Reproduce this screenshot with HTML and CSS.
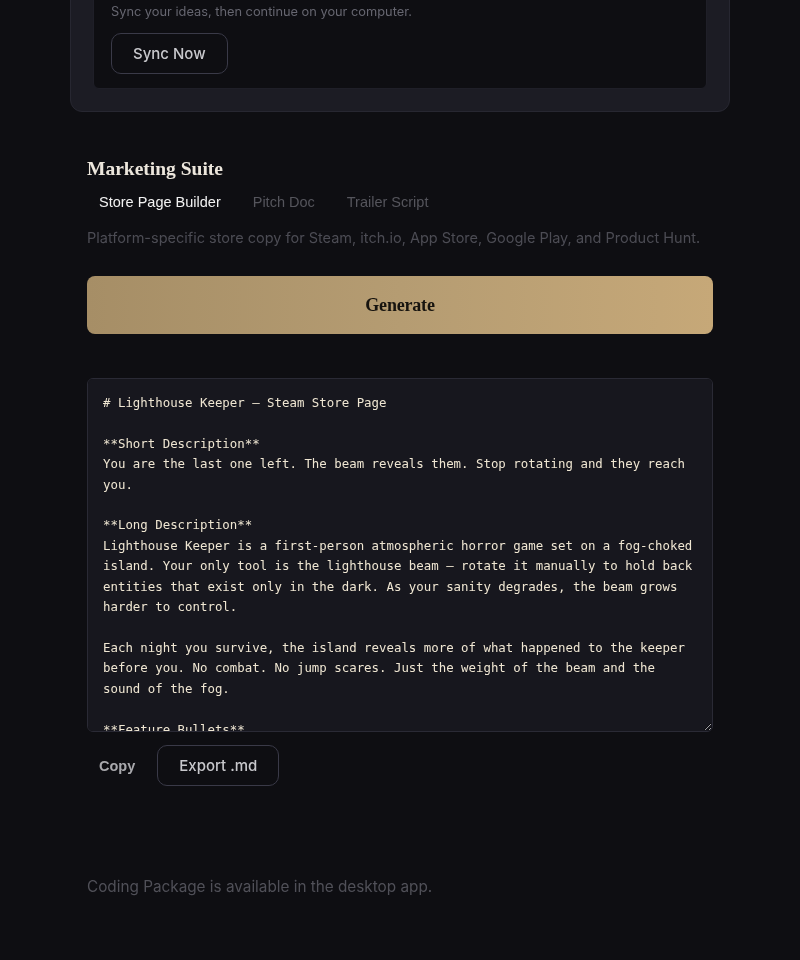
FILE: index.html
```html
<!DOCTYPE html>
<html lang="en">
<head>
  <meta charset="UTF-8">
  <meta name="viewport" content="width=device-width, initial-scale=1.0">
  <title>Marketing Suite</title>
  <link rel="stylesheet" href="styles.css">
</head>
<body>

  <main class="page">

    <div class="sync-card">
      <div class="sync-panel">
        <p class="sync-text">Sync your ideas, then continue on your computer.</p>
        <button class="btn-outline">Sync Now</button>
      </div>
    </div>

    <section class="suite">
      <h2 class="suite-title">Marketing Suite</h2>

      <div class="tabs">
        <button class="tab active">Store Page Builder</button>
        <button class="tab">Pitch Doc</button>
        <button class="tab">Trailer Script</button>
      </div>

      <p class="suite-desc">Platform-specific store copy for Steam, itch.io, App Store, Google Play, and Product Hunt.</p>

      <button class="btn-generate">Generate</button>

      <textarea class="output" spellcheck="false" readonly># Lighthouse Keeper — Steam Store Page

**Short Description**
You are the last one left. The beam reveals them. Stop rotating and they reach you.

**Long Description**
Lighthouse Keeper is a first-person atmospheric horror game set on a fog-choked island. Your only tool is the lighthouse beam — rotate it manually to hold back entities that exist only in the dark. As your sanity degrades, the beam grows harder to control.

Each night you survive, the island reveals more of what happened to the keeper before you. No combat. No jump scares. Just the weight of the beam and the sound of the fog.

**Feature Bullets**
- Hand-cranked beam mechanics that fight back as your sanity slips
- A fog-choked island that changes every night
- Environmental storytelling told through the previous keeper's logs
- No combat, no jump scares — only light and dark</textarea>

      <div class="output-actions">
        <button class="btn-text">Copy</button>
        <button class="btn-outline">Export .md</button>
      </div>

      <p class="note">Coding Package is available in the desktop app.</p>
    </section>

  </main>

</body>
</html>
```

FILE: styles.css
```css
body {
  margin: 0;
  padding: 0;
  background-color: #0e0e12;
  font-family: Inter, "Noto Sans", sans-serif;
  color: #ddd;
}

.page {
  width: 660px;
  margin: 0 auto;
}

/* sync card (page is scrolled, top edge sits above the fold) */
.sync-card {
  margin-top: -42px;
  padding: 22px;
  background-color: #1c1c24;
  border: 1px solid #272731;
  border-radius: 12px;
}

.sync-panel {
  background-color: #0e0e12;
  border: 1px solid #1f1f28;
  border-radius: 6px;
  padding: 20px 17px 14px;
}

.sync-text {
  margin: 0 0 11px;
  font-size: 12.8px;
  line-height: 20px;
  color: #666670;
}

button {
  font-family: inherit;
  cursor: pointer;
}

.btn-outline {
  background: transparent;
  border: 1px solid #3a3a48;
  border-radius: 10px;
  color: #c8c8cc;
  font-size: 15px;
  font-weight: 500;
  height: 41px;
  padding: 0 21px;
}

/* marketing section */
.suite {
  padding: 43px 17px 40px;
}

.suite-title {
  margin: 0;
  font-family: "Liberation Serif", serif;
  font-weight: bold;
  font-size: 19.5px;
  line-height: 28px;
  color: #ece6dc;
}

.tabs {
  display: flex;
  gap: 8px;
  margin-top: 4px;
}

.tab {
  background: none;
  border: none;
  padding: 0 12px;
  height: 30px;
  font-family: "Liberation Sans", Arial, sans-serif;
  font-size: 14.5px;
  color: #55555c;
}

.tab.active {
  color: #f2f2f2;
}

.suite-desc {
  margin: 10px 0 0;
  font-size: 14.5px;
  line-height: 22px;
  color: #4c4c54;
}

.btn-generate {
  display: block;
  width: 100%;
  height: 58px;
  margin-top: 27px;
  border: none;
  border-radius: 8px;
  background: linear-gradient(90deg, #a68e66 0%, #b59c72 50%, #c6a878 100%);
  font-family: "Liberation Serif", serif;
  font-size: 18px;
  font-weight: bold;
  letter-spacing: -0.2px;
  color: #17140f;
}

.output {
  display: block;
  box-sizing: border-box;
  width: 100%;
  height: 354px;
  margin-top: 44px;
  padding: 14px 15px;
  background-color: #17171e;
  border: 1px solid #2a2a35;
  border-radius: 6px;
  font-family: "DejaVu Sans Mono", monospace;
  font-size: 12.4px;
  line-height: 20.4px;
  color: #efe6d2;
  resize: vertical;
  outline: none;
  scrollbar-width: none;
}

.output-actions {
  display: flex;
  align-items: center;
  gap: 10px;
  margin-top: 13px;
}

.btn-text {
  background: none;
  border: none;
  padding: 0 12px;
  height: 41px;
  font-family: "Liberation Sans", Arial, sans-serif;
  font-size: 14.5px;
  font-weight: bold;
  color: #a8a8ac;
}

.note {
  margin: 89px 0 0;
  font-size: 15.3px;
  line-height: 24px;
  color: #505058;
}
```
